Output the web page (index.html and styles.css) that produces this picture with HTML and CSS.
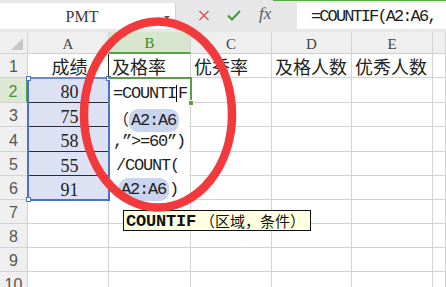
FILE: index.html
```html
<!DOCTYPE html>
<html>
<head>
<meta charset="utf-8">
<link rel="stylesheet" href="styles.css">
</head>
<body>
<div class="app">
  <div class="toolbar">
    <div class="namebox"><span class="name">PMT</span><span class="caret"></span></div>
    <div class="fbtns">
      <svg class="ico" width="12" height="11" viewBox="0 0 12 11"><path d="M1.5 1 L10.5 10 M10.5 1 L1.5 10" stroke="#d9595b" stroke-width="1.5" fill="none"/></svg>
      <svg class="ico" width="14" height="11" viewBox="0 0 14 11"><path d="M1 5.5 L5 9.5 L13 1" stroke="#3d9b3d" stroke-width="2" fill="none"/></svg>
      <span class="fx">fx</span>
    </div>
    <div class="finput">=COUNTIF(A2:A6,</div>
  </div>
  <div class="sheet">
    <div class="c corner"><span class="tri"></span></div>
    <div class="c ch">A</div>
    <div class="c ch on">B</div>
    <div class="c ch">C</div>
    <div class="c ch">D</div>
    <div class="c ch">E</div>
    <div class="c ch"></div>

    <div class="c rh">1</div>
    <div class="c num dark-r">成绩</div>
    <div class="c txt">及格率</div>
    <div class="c txt">优秀率</div>
    <div class="c txt">及格人数</div>
    <div class="c txt">优秀人数</div>
    <div class="c"></div>

    <div class="c rh on">2</div>
    <div class="c num sel-cell dark-b">80</div>
    <div class="c"></div><div class="c"></div><div class="c"></div><div class="c"></div><div class="c"></div>

    <div class="c rh">3</div>
    <div class="c num sel-cell dark-b">75</div>
    <div class="c"></div><div class="c"></div><div class="c"></div><div class="c"></div><div class="c"></div>

    <div class="c rh">4</div>
    <div class="c num sel-cell dark-b">58</div>
    <div class="c"></div><div class="c"></div><div class="c"></div><div class="c"></div><div class="c"></div>

    <div class="c rh">5</div>
    <div class="c num sel-cell dark-b">55</div>
    <div class="c"></div><div class="c"></div><div class="c"></div><div class="c"></div><div class="c"></div>

    <div class="c rh">6</div>
    <div class="c num sel-cell">91</div>
    <div class="c"></div><div class="c"></div><div class="c"></div><div class="c"></div><div class="c"></div>

    <div class="c rh">7</div>
    <div class="c"></div><div class="c"></div><div class="c"></div><div class="c"></div><div class="c"></div><div class="c"></div>
    <div class="c rh">8</div>
    <div class="c"></div><div class="c"></div><div class="c"></div><div class="c"></div><div class="c"></div><div class="c"></div>
    <div class="c rh">9</div>
    <div class="c"></div><div class="c"></div><div class="c"></div><div class="c"></div><div class="c"></div><div class="c"></div>
    <div class="c rh">10</div>
    <div class="c"></div><div class="c"></div><div class="c"></div><div class="c"></div><div class="c"></div><div class="c"></div>

    <div class="sel"><span class="hd hd-tl"></span><span class="hd hd-tr"></span><span class="hd hd-bl"></span></div>
    <div class="active"><span class="fill"></span></div>
    <div class="editor">
      <div class="ln">=COUNTI<span class="cursor"></span>F</div>
      <div class="ln"><span class="cjk">（</span><span class="ref">A2:A6</span></div>
      <div class="ln">,”&gt;=60”)</div>
      <div class="ln l5">/COUNT(</div>
      <div class="ln l6"><span class="ref">A2:A6</span>)</div>
    </div>
    <div class="tip"><b class="fn">COUNTIF</b> <span class="args">（区域，条件）</span></div>
  </div>
  <svg class="ring" width="446" height="287" viewBox="0 0 446 287"><ellipse cx="158" cy="114.5" rx="74" ry="93" fill="none" stroke="#f23a3c" stroke-width="8.5"/></svg>
</div>
</body>
</html>
```

FILE: styles.css
```css
html, body {
  margin: 0;
  padding: 0;
}
body {
  width: 446px;
  height: 287px;
  overflow: hidden;
  background: #ffffff;
  font-family: "Liberation Serif", "Noto Sans CJK SC", serif;
}
.app {
  position: relative;
  width: 446px;
  height: 287px;
  overflow: hidden;
}
.toolbar {
  height: 32px;
  display: flex;
  align-items: flex-start;
  background: #e7e7e7 linear-gradient(#5aa747, #5aa747) no-repeat 273px 0 / 173px 1px;
  box-sizing: border-box;
}
.namebox {
  margin-top: 3px;
  width: 176px;
  height: 26px;
  box-sizing: border-box;
  background: #ffffff;
  border-right: 1px solid #d2d2d2;
  display: flex;
  align-items: center;
  padding-right: 26px;
  position: relative;
}
.name {
  flex: 1;
  text-align: center;
  font-family: "Liberation Serif", serif;
  font-size: 16px;
  color: #3a3a3a;
  padding-top: 1px;
}
.caret {
  width: 0;
  height: 0;
  border-left: 3px solid transparent;
  border-right: 3px solid transparent;
  border-top: 3px solid #555555;
  margin-right: -21px;
  margin-top: 2px;
}
.fbtns {
  width: 121px;
  height: 32px;
  display: flex;
  align-items: center;
  padding-left: 22px;
  box-sizing: border-box;
  gap: 17px;
}
.ico {
  display: block;
  margin-top: -1px;
}
.fx {
  font-family: "Liberation Serif", serif;
  font-style: italic;
  font-size: 17px;
  color: #5a5a5a;
  margin-top: -4px;
  margin-left: 1px;
}
.finput {
  flex: 1;
  margin-top: 3px;
  height: 26px;
  box-sizing: border-box;
  background: #ffffff;
  padding-left: 14px;
  padding-top: 3px;
  line-height: 22px;
  font-family: "Liberation Mono", monospace;
  font-size: 17px;
  letter-spacing: -1.9px;
  color: #1e1e1e;
  white-space: nowrap;
  overflow: hidden;
}

.sheet {
  position: relative;
  display: grid;
  grid-template-columns: 28px 81px 82px 81px 80px 81px 1fr;
  grid-template-rows: 22px 24px 25px 24px 25px 24px 24px 24px 24px 24px 24px;
}
.c {
  box-sizing: border-box;
  border-right: 1px solid #d3d3d3;
  border-bottom: 1px solid #d3d3d3;
  font-size: 18px;
  color: #222222;
  display: flex;
  align-items: center;
  line-height: 20px;
  padding-top: 2px;
  white-space: nowrap;
  overflow: hidden;
}
.corner {
  background: #efefef;
  justify-content: flex-end;
  align-items: flex-end;
  padding: 0 4px 3px 0;
}
.tri {
  width: 0;
  height: 0;
  border-left: 12px solid transparent;
  border-bottom: 12px solid #c6c6c6;
}
.ch {
  background: #efefef;
  justify-content: center;
  font-family: "Liberation Serif", serif;
  font-size: 15px;
  color: #444444;
  border-bottom-color: #cfcfcf;
}
.ch.on {
  background: #d6e5cb;
  color: #3f8c2c;
  border-bottom: 2px solid #57a23d;
}
.rh {
  background: #efefef;
  justify-content: center;
  font-family: "Liberation Sans", sans-serif;
  font-size: 16px;
  color: #555555;
  padding-top: 3px;
}
.rh.on {
  background: #dde8d3;
  color: #4a8f37;
  border-right: 2px solid #57a23d;
}
.num {
  justify-content: center;
  padding-left: 3px;
  padding-top: 4px;
}
.txt {
  padding-left: 3px;
  padding-top: 4px;
}
.dark-r {
  border-right-color: #2a2a2a;
}
.sel-cell {
  background: #dce1f3;
}
.dark-b {
  border-bottom-color: #2a2a3a;
}

.sel {
  position: absolute;
  left: 27px;
  top: 45px;
  width: 83px;
  height: 124px;
  box-sizing: border-box;
  border: 2px solid #4b70d2;
  border-top-color: #6a8ad9;
}
.hd {
  position: absolute;
  width: 5px;
  height: 5px;
  box-sizing: border-box;
  background: #ffffff;
  border: 1px solid #4b70d2;
}
.hd-tl { left: -3px; top: -3px; }
.hd-tr { right: -3px; top: -3px; }
.hd-bl { left: -3px; bottom: -3px; }

.active {
  position: absolute;
  left: 108px;
  top: 45px;
  width: 84px;
  height: 27px;
  box-sizing: border-box;
  border: 2px solid #57a23d;
  border-left: none;
}
.fill {
  position: absolute;
  right: -4px;
  bottom: -4px;
  width: 6px;
  height: 6px;
  background: #57a23d;
  border: 1px solid #ffffff;
  box-sizing: border-box;
}
.editor {
  position: absolute;
  left: 110px;
  top: 47px;
  width: 79px;
  height: 121px;
  background: #ffffff;
  padding: 3px 0 0 3px;
  box-sizing: border-box;
  font-family: "Liberation Mono", monospace;
  font-size: 17px;
  letter-spacing: -1.2px;
  color: #1e1e1e;
  white-space: nowrap;
}
.ln {
  height: 24px;
  line-height: 24px;
}
.l5 {
  padding-left: 3px;
}
.l6 {
  padding-left: 6px;
}
.cjk {
  font-family: "Noto Sans CJK SC", sans-serif;
  font-size: 16px;
  letter-spacing: 0;
}
.ref {
  background: #c9d5ee;
  border-radius: 9px;
  padding: 2px 3px 2px 2px;
}
.cursor {
  display: inline-block;
  width: 0;
  height: 17px;
  border-left: 1px solid #000000;
  vertical-align: -4px;
  margin-right: 1px;
}
.tip {
  position: absolute;
  left: 123px;
  top: 178px;
  width: 188px;
  height: 21px;
  box-sizing: border-box;
  background: #ffffe1;
  border: 1px solid #111111;
  padding-left: 2px;
  display: flex;
  align-items: center;
  white-space: nowrap;
  font-size: 15px;
  color: #111111;
}
.fn {
  font-family: "Liberation Mono", monospace;
  font-size: 17px;
  letter-spacing: -0.2px;
  font-weight: bold;
  margin-top: 2px;
}
.args {
  font-family: "Noto Sans CJK SC", sans-serif;
  font-size: 15px;
  margin-left: 4px;
}
.ring {
  position: absolute;
  left: 0;
  top: 0;
  pointer-events: none;
}
```
